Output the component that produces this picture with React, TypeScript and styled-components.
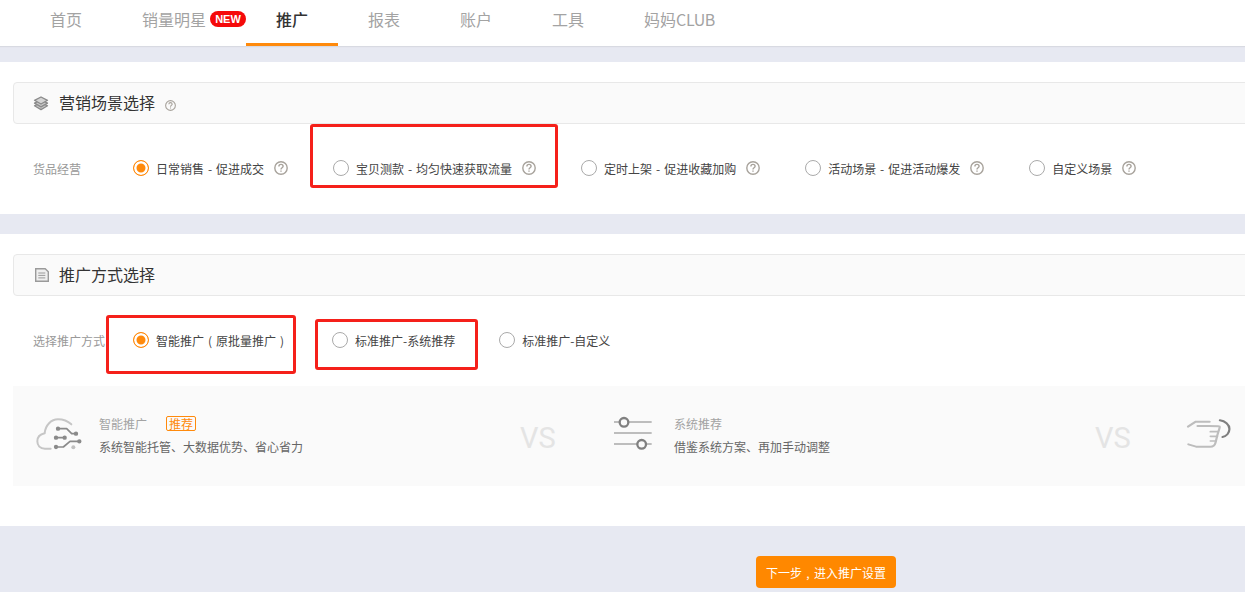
import React from "react";
import styled, { createGlobalStyle } from "styled-components";

const Global = createGlobalStyle`
  html, body { margin: 0; padding: 0; background: #e7e9f2; overflow: hidden; }
  body { font-family: "Noto Sans CJK SC", "Noto Sans", sans-serif; }
`;
const Page = styled.div`
  position: relative;
  width: 1245px;
  height: 592px;
  overflow: hidden;
  background: #e7e9f2;
`;
const Nav = styled.nav`
  display: flex;
  height: 46px;
  padding-left: 20px;
  background: #fff;
  box-shadow: 0 1px 1px #d8dae2;
`;
const Tab = styled.div<{ $active?: boolean; $extra?: boolean }>`
  position: relative;
  box-sizing: border-box;
  height: 46px;
  padding: 0 ${(p) => (p.$extra ? "40px" : "30px")} 0 30px;
  font-size: 16px;
  line-height: 38px;
  color: ${(p) => (p.$active ? "#333" : "#a3a3a3")};
  font-weight: ${(p) => (p.$active ? 500 : 400)};
  border-bottom: 3px solid ${(p) => (p.$active ? "#ff8a0c" : "transparent")};
  white-space: nowrap;
`;
const Latin = styled.span`
  letter-spacing: -0.4px;
`;
const NewBadge = styled.span`
  position: absolute;
  left: 98px;
  top: 11px;
  width: 36px;
  height: 16px;
  border-radius: 8px;
  background: #f50a0a;
  color: #fff;
  font: 700 11px/16px "Liberation Sans", sans-serif;
  text-align: center;
`;
const Section = styled.section<{ $h: number; $mt: number }>`
  box-sizing: border-box;
  height: ${(p) => p.$h}px;
  margin-top: ${(p) => p.$mt}px;
  padding: 20px 0 0 13px;
  background: #fff;
`;
const Header = styled.header`
  box-sizing: border-box;
  display: flex;
  align-items: center;
  width: 1260px;
  height: 42px;
  padding-left: 19px;
  background: #fafafa;
  border: 1px solid #e8e8e8;
  border-radius: 4px;
`;
const IconSlot = styled.span`
  display: flex;
  justify-content: flex-end;
  width: 16px;
`;
const HeaderTitle = styled.h2`
  margin: 0 0 2px 10px;
  font-size: 16px;
  font-weight: 400;
  color: #333;
  line-height: 38px;
`;
const SmallHelp = styled.span`
  display: flex;
  margin-left: 10px;
  margin-top: 4px;
`;
const Row = styled.div`
  display: flex;
  align-items: center;
  height: 16px;
  padding-top: 36px;
`;
const RowLabel = styled.div`
  flex: none;
  width: 100px;
  margin-left: 20px;
  padding-top: 2px;
  font-size: 12px;
  color: #999;
  white-space: nowrap;
  line-height: 16px;
`;
const Options = styled.div<{ $gap: number }>`
  display: flex;
  column-gap: ${(p) => p.$gap}px;
`;
const Option = styled.label`
  display: flex;
  align-items: center;
  font-size: 12px;
  line-height: 16px;
  color: #444;
  white-space: pre;
  word-spacing: 1.25px;
`;
const OptionText = styled.span`
  padding-top: 2px;
`;
const Punct = styled.span`
  display: inline-block;
  width: 12px;
  text-align: center;
`;
const Radio = styled.span<{ $on?: boolean }>`
  box-sizing: border-box;
  flex: none;
  width: 16px;
  height: 16px;
  margin-right: 7px;
  border-radius: 50%;
  border: 1px solid ${(p) => (p.$on ? "#ff8a0c" : "#aaa")};
  background: ${(p) => (p.$on ? "#ff8a0c" : "#fff")};
  box-shadow: ${(p) => (p.$on ? "inset 0 0 0 2.5px #fff" : "none")};
`;
const HelpWrap = styled.span`
  display: flex;
  margin-left: 10px;
`;
const Compare = styled.div`
  display: flex;
  align-items: center;
  width: 1232px;
  height: 100px;
  margin-top: 38px;
  background: #fafafa;
`;
const Feature = styled.div<{ $w: number; $pl: number }>`
  box-sizing: border-box;
  flex: none;
  display: flex;
  align-items: center;
  width: ${(p) => p.$w}px;
  padding-left: ${(p) => p.$pl}px;
`;
const FeatureText = styled.div<{ $ml: number }>`
  margin-left: ${(p) => p.$ml}px;
  margin-top: -2px;
`;
const FeatureTitle = styled.div`
  display: flex;
  align-items: center;
  height: 18px;
  font-size: 12px;
  color: #a3a3a3;
`;
const FeatureDesc = styled.div`
  margin-top: 6px;
  font-size: 12px;
  line-height: 18px;
  color: #666;
`;
const Recommend = styled.span`
  box-sizing: border-box;
  height: 15px;
  margin-left: 19px;
  padding: 0 2px;
  border: 1px solid #ff8a0c;
  border-radius: 2px;
  color: #ff8a0c;
  font-size: 12px;
  line-height: 13px;
`;
const Vs = styled.div<{ $w: number }>`
  flex: none;
  width: ${(p) => p.$w}px;
  padding-top: 4px;
  font: 400 29px/36px Roboto, "Liberation Sans", sans-serif;
  color: #e4e4e4;
`;
const Footer = styled.div`
  display: flex;
  padding: 30px 0 0 756px;
`;
const NextButton = styled.button`
  width: 140px;
  height: 32px;
  padding: 0;
  border: 0;
  border-radius: 4px;
  background: #ff8800;
  color: #fff;
  font-family: inherit;
  font-size: 12px;
`;
const Mark = styled.div<{ $x: number; $y: number; $w: number; $h: number }>`
  position: absolute;
  box-sizing: border-box;
  left: ${(p) => p.$x}px;
  top: ${(p) => p.$y}px;
  width: ${(p) => p.$w}px;
  height: ${(p) => p.$h}px;
  border: 3px solid #f5201a;
  border-radius: 3px;
  pointer-events: none;
`;

const Help = ({ s = 14 }: { s?: number }) => (
  <svg width={s} height={s} viewBox="0 0 14 14" fill="none" stroke="#a8a39c" strokeWidth={1.4}>
    <circle cx="7" cy="7" r="6.2" />
    <path d="M4.900 5.400C4.900 4.200 5.900 3.400 7 3.400c1.200 0 2.100.8 2.100 1.900 0 1.500-2.100 1.500-2.100 3.200" />
    <path d="M7 9.500v1.300" />
  </svg>
);
const Layers = () => (
  <svg width="16" height="15" viewBox="0 0 16 15" fill="#c9c9c9" stroke="#8a8a8a" strokeWidth="1.300" strokeLinejoin="round">
    <path d="M1.500 9.800 8 6.500l6.500 3.300L8 13.600Z" />
    <path d="M1.500 7.100 8 3.800l6.500 3.300L8 10.900Z" />
    <path d="M1.500 4.300 8 1l6.500 3.300L8 8Z" fill="#d4d4d4" />
  </svg>
);
const Doc = () => (
  <svg width="14" height="14" viewBox="0 0 14 14" fill="#efefef" stroke="#9a9a9a" strokeWidth="1.400">
    <path d="M.7.700h9.500l3.100 3.100v9.500H.7z" />
    <path d="M3.300 5h7M3.300 7.400h7M3.300 9.900h7" fill="none" strokeWidth="1" />
  </svg>
);
const Cloud = () => (
  <svg width="60" height="48" viewBox="0 0 180 144" fill="none" strokeLinecap="round" strokeLinejoin="round">
    <path d="M62 110H45C30 110 22 100 22 88c0-12 8-21 22-24 2-25 20-42 40-42 17 0 30 6 40 15" stroke="#c6c6c6" strokeWidth="6" />
    <g stroke="#8a8a8a" strokeWidth="5" fill="#8a8a8a">
      <path d="M84 50h26l15 15h14" fill="none" />
      <circle cx="84" cy="50" r="4" />
      <circle cx="138" cy="65" r="4" />
      <path d="M78 77h26" fill="none" />
      <circle cx="78" cy="77" r="4" />
      <circle cx="104" cy="77" r="4" />
      <path d="M78 105h22l20-17h28" fill="none" />
      <circle cx="78" cy="105" r="4" />
      <circle cx="148" cy="88" r="4" />
    </g>
    <circle cx="130" cy="106" r="6" fill="#c0c0c0" />
  </svg>
);
const Sliders = () => (
  <svg width="60" height="52" viewBox="0 0 180 156" fill="none">
    <path d="M42 36h113M42 69h113M42 102h113" stroke="#bdbdbd" strokeWidth="6" />
    <circle cx="72" cy="37" r="13" fill="#fafafa" stroke="#808080" strokeWidth="7" />
    <circle cx="125" cy="103" r="13" fill="#fafafa" stroke="#808080" strokeWidth="7" />
  </svg>
);
const HandPoint = () => (
  <svg width="60" height="48" viewBox="0 0 180 144" fill="none" strokeLinecap="round" strokeLinejoin="round">
    <g transform="translate(-2.400 0) scale(1.100 1)">
      <path d="M24 44 45 29h38M50 42h30l28 1c3 0 3 2 2 5l-6 22-5 22c-2 8-6 12-14 12H46L25 97" stroke="#bdbdbd" strokeWidth="6" />
      <path d="M85 59h21M85 73h19M85 87h15" stroke="#bdbdbd" strokeWidth="5" />
      <path d="M111 25c14 2 26 12 26 26 0 12-8 22-19 24" stroke="#7f7f7f" strokeWidth="6" />
    </g>
  </svg>
);

const tabs = ["首页", "销量明星", "推广", "报表", "账户", "工具"];
const scenes = ["日常销售 - 促进成交", "宝贝测款 - 均匀快速获取流量", "定时上架 - 促进收藏加购", "活动场景 - 促进活动爆发", "自定义场景"];

export default function App() {
  return (
    <Page>
      <Global />
      <Nav>
        {tabs.map((t, i) => (
          <Tab key={t} $active={i === 2} $extra={i === 1}>
            {t}
            {i === 1 && <NewBadge>NEW</NewBadge>}
          </Tab>
        ))}
        <Tab>妈妈<Latin>CLUB</Latin></Tab>
      </Nav>
      <Section $h={152} $mt={16}>
        <Header>
          <IconSlot><Layers /></IconSlot>
          <HeaderTitle>营销场景选择</HeaderTitle>
          <SmallHelp><Help s={11} /></SmallHelp>
        </Header>
        <Row>
          <RowLabel>货品经营</RowLabel>
          <Options $gap={45}>
            {scenes.map((s, i) => (
              <Option key={s}>
                <Radio $on={i === 0} />
                <OptionText>{s}</OptionText>
                <HelpWrap><Help /></HelpWrap>
              </Option>
            ))}
          </Options>
        </Row>
      </Section>
      <Section $h={292} $mt={20}>
        <Header>
          <IconSlot><Doc /></IconSlot>
          <HeaderTitle>推广方式选择</HeaderTitle>
        </Header>
        <Row>
          <RowLabel>选择推广方式</RowLabel>
          <Options $gap={44}>
            <Option>
              <Radio $on />
              <OptionText>智能推广<Punct>(</Punct>原批量推广<Punct>)</Punct></OptionText>
            </Option>
            <Option>
              <Radio />
              <OptionText>标准推广-系统推荐</OptionText>
            </Option>
            <Option>
              <Radio />
              <OptionText>标准推广-自定义</OptionText>
            </Option>
          </Options>
        </Row>
        <Compare>
          <Feature $w={507} $pl={17}>
            <Cloud />
            <FeatureText $ml={9}>
              <FeatureTitle>智能推广<Recommend>推荐</Recommend></FeatureTitle>
              <FeatureDesc>系统智能托管、大数据优势、省心省力</FeatureDesc>
            </FeatureText>
          </Feature>
          <Vs $w={80}>VS</Vs>
          <Feature $w={495} $pl={0}>
            <Sliders />
            <FeatureText $ml={14}>
              <FeatureTitle>系统推荐</FeatureTitle>
              <FeatureDesc>借鉴系统方案、再加手动调整</FeatureDesc>
            </FeatureText>
          </Feature>
          <Vs $w={85}>VS</Vs>
          <HandPoint />
        </Compare>
      </Section>
      <Footer>
        <NextButton>下一步<Punct>,</Punct>进入推广设置</NextButton>
      </Footer>
      <Mark $x={310} $y={124} $w={248} $h={64} />
      <Mark $x={106} $y={315} $w={190} $h={59} />
      <Mark $x={315} $y={319} $w={163} $h={51} />
    </Page>
  );
}
